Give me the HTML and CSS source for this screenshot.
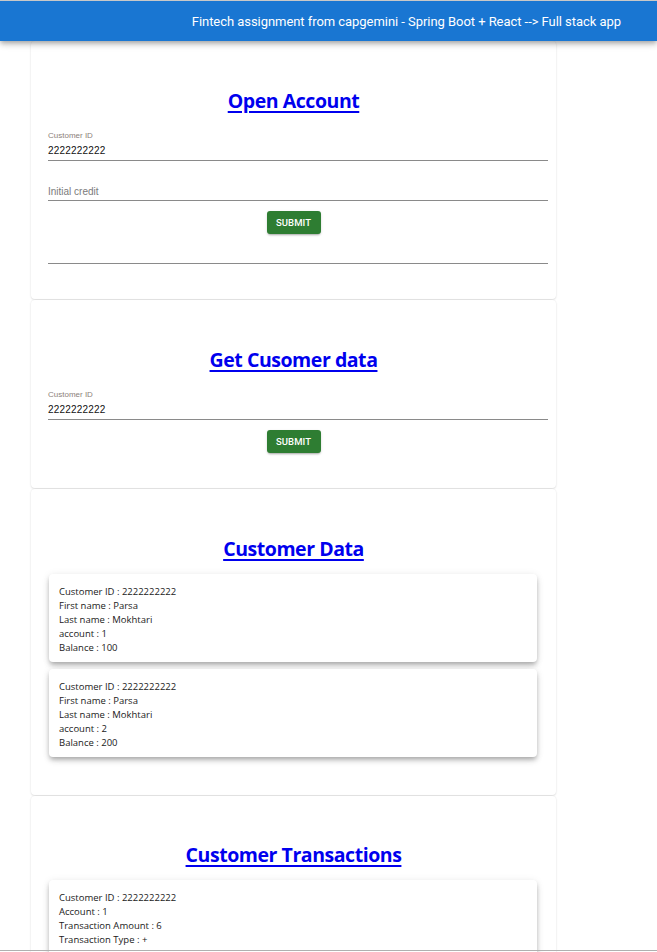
FILE: index.html
```html
<!DOCTYPE html>
<html lang="en">
<head>
<meta charset="utf-8">
<title>Fintech</title>
<link rel="stylesheet" href="styles.css">
</head>
<body>
<header class="appbar">
  <div class="appbar-title">Fintech assignment from capgemini - Spring Boot + React --&gt; Full stack app</div>
</header>
<main class="main">
  <section class="card card-open">
    <h2 class="title"><a href="#">Open Account</a></h2>
    <div class="field">
      <div class="field-label">Customer ID</div>
      <div class="field-value">2222222222</div>
    </div>
    <div class="field field-empty">
      <div class="field-placeholder">Initial credit</div>
    </div>
    <div class="btn-row"><button class="btn">SUBMIT</button></div>
    <div class="rule"></div>
  </section>

  <section class="card card-get">
    <h2 class="title"><a href="#">Get Cusomer data</a></h2>
    <div class="field">
      <div class="field-label">Customer ID</div>
      <div class="field-value">2222222222</div>
    </div>
    <div class="btn-row"><button class="btn">SUBMIT</button></div>
  </section>

  <section class="card card-data">
    <h2 class="title"><a href="#">Customer Data</a></h2>
    <div class="list">
      <div class="item">
        <div>Customer ID : 2222222222</div>
        <div>First name : Parsa</div>
        <div>Last name : Mokhtari</div>
        <div>account : 1</div>
        <div>Balance : 100</div>
      </div>
      <div class="item">
        <div>Customer ID : 2222222222</div>
        <div>First name : Parsa</div>
        <div>Last name : Mokhtari</div>
        <div>account : 2</div>
        <div>Balance : 200</div>
      </div>
    </div>
  </section>

  <section class="card card-tx">
    <h2 class="title"><a href="#">Customer Transactions</a></h2>
    <div class="list">
      <div class="item">
        <div>Customer ID : 2222222222</div>
        <div>Account : 1</div>
        <div>Transaction Amount : 6</div>
        <div>Transaction Type : +</div>
      </div>
    </div>
  </section>
</main>
<div class="window-edge"></div>
</body>
</html>
```
FILE: styles.css
```css
html, body {
  margin: 0;
  padding: 0;
  background: #ffffff;
  overflow: hidden;
  height: 952px;
}
body {
  position: relative;
  font-family: "Open Sans", "Noto Sans", sans-serif;
  border-top: 1px solid #c8c8c8;
  box-sizing: border-box;
}
.appbar {
  position: relative;
  z-index: 2;
  height: 40px;
  background: #1976d2;
  display: flex;
  align-items: center;
  justify-content: flex-end;
  padding-right: 36px;
  box-shadow: 0 2px 4px -1px rgba(0,0,0,0.2), 0 4px 5px 0 rgba(0,0,0,0.14), 0 1px 10px 0 rgba(0,0,0,0.12);
}
.appbar-title {
  color: #ffffff;
  font-family: "Roboto", "Liberation Sans", sans-serif;
  font-size: 13px;
  letter-spacing: -0.05px;
  padding-top: 1px;
}
.main {
  width: 525px;
  margin-left: 31px;
  display: flex;
  flex-direction: column;
  gap: 1px;
}
.card {
  background: #fff;
  border-radius: 4px;
  box-shadow: 0 1px 2px 0 rgba(0,0,0,0.10), 0 0 2px 0 rgba(0,0,0,0.08);
  padding-top: 46px;
  display: flex;
  flex-direction: column;
}
.card-open { padding-bottom: 35px; }
.card-get { padding-bottom: 35px; }
.card-data { padding-bottom: 38px; }
.card-tx { padding-top: 45px; }
.title {
  margin: 0;
  height: 28px;
  line-height: 28px;
  text-align: center;
  font-size: 19.5px;
  font-weight: 700;
  font-family: "Open Sans", "Noto Sans", sans-serif;
  letter-spacing: -0.45px;
}
.title a {
  color: #0000ee;
  text-decoration: underline;
  text-decoration-thickness: 2px;
  text-underline-offset: 3px;
}
.field {
  margin-left: 17px;
  width: 500px;
  height: 32px;
  border-bottom: 1px solid #8a8a8a;
  margin-top: 13px;
  display: flex;
  flex-direction: column;
  font-family: "Liberation Sans", Arial, sans-serif;
}
.field-label {
  font-size: 8px;
  color: #8c7f7a;
  height: 12px;
  line-height: 12px;
  margin-top: 2px;
}
.field-value {
  font-size: 10px;
  color: #111;
  line-height: 16px;
  margin-top: 1px;
  letter-spacing: 0.2px;
}
.field-empty {
  margin-top: 7px;
  justify-content: flex-end;
}
.field-placeholder {
  font-size: 10px;
  color: #7b7b7b;
  line-height: 14px;
  padding-bottom: 1px;
}
.btn-row {
  display: flex;
  justify-content: center;
  margin-top: 10px;
}
.btn {
  width: 54px;
  height: 23px;
  padding: 0;
  border: none;
  border-radius: 3px;
  background: #2e7d32;
  color: #fff;
  font-family: "Roboto", "Liberation Sans", sans-serif;
  font-size: 9.5px;
  font-weight: 500;
  letter-spacing: 0.1px;
  box-shadow: 0 2px 2px -1px rgba(0,0,0,0.25), 0 1px 3px rgba(0,0,0,0.12);
}
.rule {
  margin-left: 17px;
  width: 500px;
  margin-top: 29px;
  border-bottom: 1px solid #8a8a8a;
}
.list {
  margin-top: 11px;
  margin-left: 18px;
  width: 488px;
  display: flex;
  flex-direction: column;
  gap: 7px;
}
.item {
  background: #fff;
  border-radius: 4px;
  padding: 11px 10px 7px;
  height: 70px;
  box-shadow: 0 3px 4px -1px rgba(0,0,0,0.22), 0 4px 6px 0 rgba(0,0,0,0.12), 0 1px 8px 0 rgba(0,0,0,0.08);
  font-family: "Open Sans", "Noto Sans", sans-serif;
  font-size: 9.5px;
  line-height: 14px;
  color: #1a1a1a;
}
.window-edge {
  position: absolute;
  left: 0;
  right: 0;
  bottom: 1px;
  height: 0;
  border-top: 1px solid #b0b0b0;
  z-index: 3;
}
```
